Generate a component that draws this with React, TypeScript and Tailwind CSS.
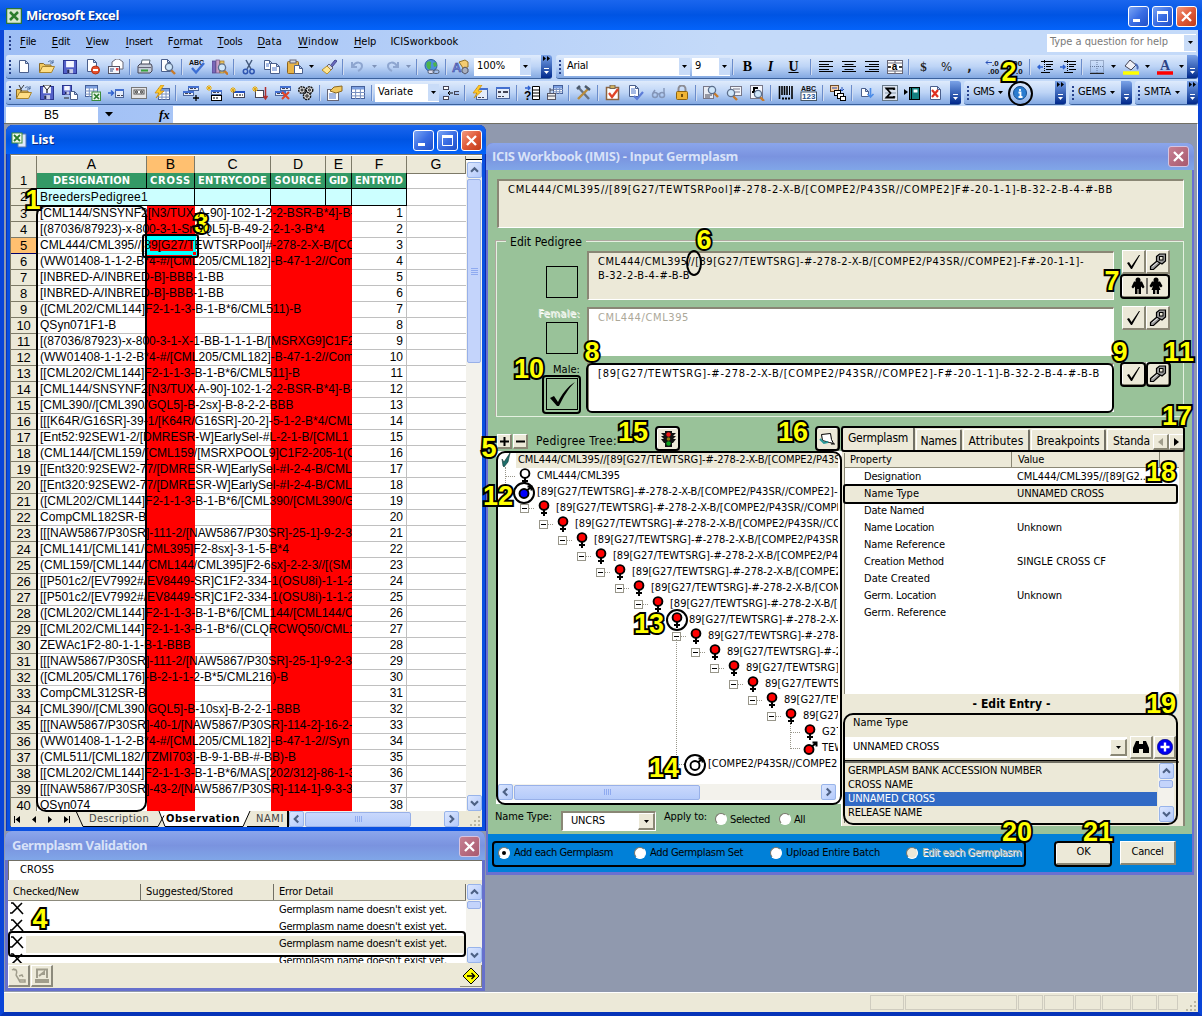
import React, { useLayoutEffect, useRef } from "react";

const UI = "font-['DejaVu_Sans_Condensed','DejaVu_Sans',sans-serif] [font-stretch:condensed]";
const TITLE = "font-['Open_Sans',sans-serif] [font-stretch:normal] text-[13px] font-bold";

/* Text set to an exact advance width by spreading its letters. */
function T({ w, className = "", children }: { w: number; className?: string; children: string }) {
  const ref = useRef<HTMLSpanElement>(null);
  useLayoutEffect(() => {
    const el = ref.current;
    if (!el) return;
    el.style.letterSpacing = "0px";
    el.style.letterSpacing = `${(w - el.getBoundingClientRect().width) / children.length}px`;
  }, [w, children]);
  return (
    <span ref={ref} className={"inline-block shrink-0 whitespace-pre " + className}>
      {children}
    </span>
  );
}

function G({ children, className = "" }: { children: React.ReactNode; className?: string }) {
  return (
    <svg viewBox="0 0 16 16" className={"h-4 w-4 shrink-0 " + className} fill="none" stroke="#334a7c" strokeWidth="1">
      {children}
    </svg>
  );
}

const Page = ({ x = 3, y = 1, w = 10, h = 13 }: { x?: number; y?: number; w?: number; h?: number }) => (
  <path
    d={`M${x + 0.5} ${y + 0.5}h${w - 4}l3 3v${h - 4}h-${w - 1}zM${x + w - 3.5} ${y + 0.5}v3h3`}
    fill="#fff"
    stroke="#4a5f8c"
  />
);
const Lens = ({ x = 9, y = 7 }: { x?: number; y?: number }) => (
  <g>
    <path d={`M${x + 2} ${y + 3}l4 4`} stroke="#c87a28" strokeWidth="2.4" />
    <circle cx={x} cy={y} r="3.6" fill="#cfe6fa" stroke="#5c6f8c" strokeWidth="1.3" />
  </g>
);
const Disk = ({ x = 1, y = 1, s = 14 }: { x?: number; y?: number; s?: number }) => (
  <g>
    <rect x={x + 0.5} y={y + 0.5} width={s - 1} height={s - 1} fill="#5360c8" stroke="#2b3590" />
    <rect x={x + s * 0.22} y={y + 1} width={s * 0.56} height={s * 0.45} fill="#f4f6ff" stroke="none" />
    <rect x={x + s * 0.3} y={y + s * 0.65} width={s * 0.42} height={s * 0.3} fill="#c6cbe8" stroke="none" />
    <rect x={x + s * 0.3} y={y + s * 0.68} width={s * 0.15} height={s * 0.25} fill="#20285c" stroke="none" />
  </g>
);
const Folder = () => (
  <g>
    <path d="M.5 13.500V4.500h4l1.500 1.500h6v2" fill="#f0c860" stroke="#8a6a28" />
    <path d="M.5 13.500l3-6h12l-3 6z" fill="#ffdf86" stroke="#a8842e" />
    <path d="M9 3c2-2 4-1 5 1m0-3v3h-3" stroke="#4a6a9c" />
  </g>
);
const Tbl = ({ x = 1, y = 2, w = 14, h = 12 }: { x?: number; y?: number; w?: number; h?: number }) => (
  <g>
    <rect x={x + 0.5} y={y + 0.5} width={w - 1} height={h - 1} fill="#fff" stroke="#45609a" />
    <rect x={x + 1} y={y + 1} width={w - 2} height="2.500" fill="#7c9fe0" stroke="none" />
    <path
      d={`M${x} ${y + h * 0.5}h${w}M${x} ${y + h * 0.76}h${w}M${x + w * 0.33} ${y + 3}v${h - 3}M${x + w * 0.67} ${y + 3}v${h - 3}`}
      stroke="#7890c0"
    />
  </g>
);
const Form = ({ x = 5, y = 6, w = 10, h = 7 }: { x?: number; y?: number; w?: number; h?: number }) => (
  <g>
    <rect x={x + 0.5} y={y + 0.5} width={w - 1} height={h - 1} fill="#e4ecfa" stroke="#4a659c" />
    <path d={`M${x} ${y + 1}h${w}`} stroke="#4470d0" strokeWidth="2" />
    <path d={`M${x + 2} ${y + h - 2.5}h3M${x + 6} ${y + h - 2.5}h2`} stroke="#445" />
  </g>
);
const Star = ({ x = 3, y = 3 }: { x?: number; y?: number }) => (
  <path d={`M${x - 3} ${y}h6M${x} ${y - 3}v6M${x - 2} ${y - 2}l4 4M${x + 2} ${y - 2}l-4 4`} stroke="#e8a800" />
);
const Bolt = () => <path d="M7 0L1 8h4l-3 5 8-7H6l4-6z" fill="#ffc928" stroke="#c88808" strokeWidth=".7" />;
const glyph = "font-['Liberation_Sans',sans-serif] font-bold";

const ic: Record<string, React.ReactNode> = {
  new: <G><Page /></G>,
  open: <G><Folder /></G>,
  save: <G><Disk /></G>,
  perm: <G><Page x={2} y={0} /><circle cx="10.500" cy="11" r="4" fill="#e8502c" stroke="#b03010" /><path d="M8 11h5" stroke="#fff" strokeWidth="2" /></G>,
  mail: <G><path d="M4 7V3l4-3h3l4 3v7H6" fill="#fff" stroke="#667" /><rect x=".5" y="7.500" width="11" height="7" fill="#f4f6fb" stroke="#556" /><path d="M2 10h4M2 12h3" /><rect x="8" y="9" width="2.500" height="2.500" fill="#d44" stroke="none" /></G>,
  print: <G><path d="M4 6l1-5h8l-1 5" fill="#fff" stroke="#567" /><path d="M1 7l2-2h11l1 2v5l-2 2H1z" fill="#c5ccd8" stroke="#445" /><path d="M1 8.500h13" stroke="#667" /><path d="M4 11.500h7" stroke="#37a03c" strokeWidth="2" /></G>,
  preview: <G><Page x={1} y={0} /><Lens x={9} y={8} /></G>,
  spell: <G className="overflow-visible"><text x="0" y="5.500" fontSize="7" className={glyph} fill="#111" stroke="none">ABC</text><path d="M3 9l4 4.500L15 4" stroke="#3c6fd4" strokeWidth="2.400" /></G>,
  research: <G><rect x="0" y="2" width="3.500" height="12" fill="#7a68b8" stroke="#4a3d86" strokeWidth=".7" /><rect x="4" y="1" width="3.500" height="13" fill="#c8a0c8" stroke="#6a4d86" strokeWidth=".7" /><rect x="8" y="2" width="4" height="12" fill="#e8c060" stroke="#a07828" strokeWidth=".7" /><Lens x={10} y={8.500} /></G>,
  cut: <G><path d="M5 1l5 9M11 1L6 10" stroke="#44597c" strokeWidth="1.500" /><circle cx="4.500" cy="12.500" r="2.200" stroke="#2f55b0" strokeWidth="1.500" /><circle cx="11" cy="12.500" r="2.200" stroke="#2f55b0" strokeWidth="1.500" /></G>,
  copy: <G><Page x={0} y={1} w={9} h={10} /><Page x={6} y={4} w={10} h={11} /><path d="M2 5h3M2 7h3M8 9h5M8 11h5" stroke="#4c74c8" /></G>,
  paste: <G><rect x=".5" y="2.500" width="11" height="12" rx="1" fill="#e8b448" stroke="#8c6420" /><rect x="3" y="1" width="6" height="3" fill="#d4d8e0" stroke="#667" /><Page x={7} y={6} w={9} h={9} /></G>,
  brush: <G><path d="M9 7l5-6 2 1-5 6z" fill="#6a6cc0" stroke="#44468c" /><path d="M8 5l4 4-2 2-4-4z" fill="#d8d8e0" stroke="#667" /><path d="M6 7l4 4-4 4-5-4z" fill="#ffe690" stroke="#b8902c" /></G>,
  undo: <G><path d="M2 3v5h5M3 7c3-5 9-4 9 0 0 3-2 4-4 5" stroke="#8ea6d0" strokeWidth="2" /></G>,
  redo: <G><path d="M14 3v5H9m4-1C10 2 4 3 4 7c0 3 2 4 4 5" stroke="#8ea6d0" strokeWidth="2" /></G>,
  globe: <G><circle cx="7" cy="6.500" r="6" fill="#4c8fdc" stroke="#2c5c9c" /><path d="M3 3c3-2 5 0 4 2s1 3-1 5-5-4-3-7zM9 4l3-1 1 4-3 1z" fill="#4cb44c" stroke="none" /><rect x="4" y="11" width="6" height="3.500" rx="1.700" stroke="#555f74" fill="#dde" /><rect x="9" y="11" width="6" height="3.500" rx="1.700" stroke="#555f74" /></G>,
  draw: <G className="overflow-visible"><path d="M6 3l6-2 3 2v5l-5 1z" fill="#f4cc70" stroke="#94742c" /><path d="M9 10l3-2 3 2v3l-3 2-3-2z" fill="#a8b0c0" stroke="#556" /><text x="-1" y="13" fontSize="13" className={glyph} fill="#6c7ed0" stroke="#34459c" strokeWidth=".5">A</text></G>,
  al: <G><path d="M1 2.500h14M1 5.500h10M1 7.500h14M1 10.500h10M1 12.500h14" stroke="#000" /></G>,
  ac: <G><path d="M1 2.500h14M3.500 5.500h9M1 7.500h14M3.500 10.500h9M1 12.500h14" stroke="#000" /></G>,
  ar: <G><path d="M1 2.500h14M5 5.500h10M1 7.500h14M5 10.500h10M1 12.500h14" stroke="#000" /></G>,
  merge: <G><rect x=".5" y="1.500" width="15" height="13" fill="#fff" stroke="#667" /><path d="M0 4h16M0 12h16M8 1v3M8 12v3" stroke="#667" /><path d="M1 8h3m8 0h3" stroke="#000" strokeWidth="1.500" /><text x="4.800" y="11" fontSize="10" className={glyph} fill="#000" stroke="none">a</text></G>,
  dec1: <G><text x="7" y="7" fontSize="8" className={glyph} fill="#111" stroke="none">.0</text><text x="3" y="15" fontSize="8" className={glyph} fill="#111" stroke="none">.00</text><path d="M7 3.500H1m2-2l-2 2 2 2" stroke="#2850b8" /></G>,
  dec2: <G><text x="3" y="7" fontSize="8" className={glyph} fill="#111" stroke="none">.00</text><text x="8" y="15" fontSize="8" className={glyph} fill="#111" stroke="none">.0</text></G>,
  out: <G><path d="M4 2.500h12M9 5.500h7M9 7.500h5M9 10.500h7M4 13.500h9" stroke="#000" /><path d="M7.500 1v14" stroke="#000" strokeDasharray="1 1" /><path d="M6 8H1m2-2L1 8l2 2" stroke="#2f62d0" strokeWidth="1.500" /></G>,
  ind: <G><path d="M4 2.500h12M9 5.500h7M9 7.500h5M9 10.500h7M4 13.500h9" stroke="#000" /><path d="M7.500 1v14" stroke="#000" strokeDasharray="1 1" /><path d="M0 8h5M3 6l2 2-2 2" stroke="#2f62d0" strokeWidth="1.500" /></G>,
  borders: <G><path d="M1.500 1.500h13v12h-13zM8 1v13M1 7.500h14" stroke="#667a9c" strokeDasharray="1 1" /><path d="M1 14.500h14" stroke="#222" /></G>,
  fill: <G><path d="M7 1l6 5-5 5-6-4z" fill="#f0f0f6" stroke="#445" /><path d="M12 5c3 1 3 4 2 5" stroke="#4c6cb8" strokeWidth="2" /><path d="M0 14h16" stroke="#ff0" strokeWidth="3.500" /></G>,
  fcol: <G><text x="3" y="11" fontSize="14" className="font-['Liberation_Serif',serif] font-bold" fill="#2c4486" stroke="none">A</text><path d="M0 14h16" stroke="#f00" strokeWidth="3.500" /></G>,
  open2: <G><Folder /><path d="M3 0l2 4 3-4M5 4v3" stroke="#333" /></G>,
  save2: <G><Disk /><path d="M4 0l4 5 4-5z" fill="#fff" stroke="#222" /><path d="M8 5v3" stroke="#222" strokeWidth="1.300" /></G>,
  save3: <G><Disk x={0} y={0} s={10} /><Page x={8} y={6} w={8} h={9} /><path d="M2 13h5" stroke="#222" /></G>,
  xl: <G><Tbl x={0} y={0} w={13} h={12} /><rect x="7" y="7" width="8.500" height="8.500" fill="#e8f4e8" stroke="#3c8c3c" /><path d="M9 9l5 5M14 9l-5 5" stroke="#2c7c2c" strokeWidth="1.700" /></G>,
  arrowform: <G><Form x={7} y={4} w={9} h={9} /><path d="M0 8h5M3 5.500L5.500 8 3 10.500" stroke="#2f62d0" strokeWidth="1.500" /></G>,
  tape: <G><rect x=".5" y="2.500" width="15" height="11" fill="#e4e4e6" stroke="#777" /><rect x="3" y="5" width="10" height="4" fill="#fff" stroke="#555" /><circle cx="5.500" cy="7" r="1" stroke="#222" /><circle cx="10.500" cy="7" r="1" stroke="#222" /></G>,
  bolttab: <G><Tbl x={4} y={3} w={12} h={12} /><Bolt /></G>,
  rowadd: <G><Form x={5} y={1} w={11} h={5} /><Form x={0} y={6} w={11} h={5} /><path d="M10 13h6M13 10v6" stroke="#000" strokeWidth="1.300" /></G>,
  star1: <G><Form x={5} y={5} w={11} h={5} /><rect x="5.500" y="10.500" width="10" height="5" fill="#fff" stroke="#000" /><path d="M7 13h6" stroke="#000" strokeDasharray="2 1" /><Star /></G>,
  star2: <G><rect x="4.500" y="6.500" width="11" height="6" fill="#fff" stroke="#445" /><path d="M5 7h11" stroke="#2450c0" strokeWidth="2" /><path d="M7 10h7" stroke="#000" strokeDasharray="2 1" /><Star x={4} y={5} /></G>,
  star3: <G><rect x="3.500" y="5.500" width="8" height="7" fill="#fff" stroke="#445" /><path d="M13.500 2v12m-2-3l2 3 2-3" stroke="#b03030" strokeWidth="1.500" /><Star x={3} y={4} /></G>,
  rowdel: <G><Form x={5} y={1} w={11} h={5} /><Form x={0} y={6} w={11} h={5} /><path d="M7 7l7 7M14 7l-7 7" stroke="#e04428" strokeWidth="2" /></G>,
  gears: <G><g stroke="#111" fill="#d8d8d8"><circle cx="4" cy="5" r="3.300" strokeWidth="1.400" strokeDasharray="2 .7" /><circle cx="11.500" cy="5" r="3.300" strokeWidth="1.400" strokeDasharray="2 .7" /><circle cx="9" cy="11" r="3.600" strokeWidth="1.400" strokeDasharray="2 .7" /><circle cx="4" cy="5" r="1" /><circle cx="11.500" cy="5" r="1" /><circle cx="9" cy="11" r="1.200" /></g></G>,
  props: <G><rect x=".5" y="4.500" width="11" height="11" fill="#fff" stroke="#667" /><path d="M2 9h7M2 11h7M2 13h7" stroke="#4c74c8" /><path d="M3 6l4-4 8-1v5l-6 2z" fill="#f0c860" stroke="#8c6820" /></G>,
  table: <G><Tbl x={1} y={1} w={14} h={13} /></G>,
  vartree: <G><rect x=".5" y="1.500" width="5" height="3" fill="#fff" stroke="#445" /><rect x=".5" y="11.500" width="5" height="3" fill="#fff" stroke="#445" /><rect x="11.500" y="6.500" width="5" height="3" fill="#a8c4f4" stroke="#445" /><path d="M10 8H5m2-2L5 8l2 2" stroke="#000" /></G>,
  boltform: <G><Form x={4} y={3} w={12} h={12} /><Bolt /></G>,
  form: <G><Form x={1} y={2} w={14} h={12} /><path d="M3 7h3M8 7h5" stroke="#445" strokeWidth="2" /></G>,
  qlist: <G className="overflow-visible"><text x="0" y="15" fontSize="12" className={glyph} fill="#000" stroke="none">?</text><path d="M1 3h5M4 1l2 2-2 2" stroke="#2f62d0" strokeWidth="1.400" /><path d="M8.500 1.500h7v13h-7zM8 5h8M8 8h8M8 11h8" stroke="#000" fill="#fff" /></G>,
  stack: <G><Tbl x={6} y={0} w={10} h={9} /><rect x=".5" y="8.500" width="8" height="6" fill="#eee" stroke="#556" /><path d="M0 11h8M3 5h4M3 3v5" stroke="#445" /></G>,
  tools: <G><path d="M2 2l11 12" stroke="#667284" strokeWidth="2.400" /><path d="M13 3L2 14" stroke="#b88c3c" strokeWidth="2.400" /><path d="M9 1l5 4M1 4l3-3" stroke="#4c5a6c" strokeWidth="2.500" /></G>,
  clip: <G><rect x="1.500" y="2.500" width="12" height="12" fill="#fff" stroke="#8c6440" strokeWidth="1.500" /><rect x="5" y="0" width="5" height="3.500" fill="#d0b060" stroke="#765" /><path d="M4 8l3 4 6-8" stroke="#e04428" strokeWidth="2.300" /></G>,
  doccheck: <G><Page x={1} y={0} w={10} h={12} /><path d="M3 4h4M3 6h5M3 8h5" stroke="#4c74c8" /><path d="M6 11l3 3 6-7" stroke="#5c7cd8" strokeWidth="2.200" /></G>,
  glasses: <G><circle cx="4" cy="10" r="2.500" stroke="#8496b8" strokeWidth="1.500" /><circle cx="11" cy="10" r="2.500" stroke="#8496b8" strokeWidth="1.500" /><path d="M2 8l2-3M13 8V3M6 9h3" stroke="#8496b8" strokeWidth="1.400" /></G>,
  lock: <G><path d="M4.500 7V4a3.500 3.500 0 017 0v3" stroke="#8c8c94" strokeWidth="2" /><rect x="2.500" y="6.500" width="11" height="8" rx="1" fill="#f0b434" stroke="#8c6414" /><path d="M8 9v3" stroke="#442c04" strokeWidth="1.500" /></G>,
  f1: <G><rect x=".5" y="1.500" width="10" height="12" fill="#e8ecf4" stroke="#778" /><path d="M2 10h7M2 12h5" stroke="#445" /><Lens x={9} y={5} /></G>,
  f2: <G><rect x="4.500" y="1.500" width="11" height="9" fill="#f4f6fb" stroke="#778" /><path d="M7 4h7M9 7h5" stroke="#778" /><Lens x={5} y={8} /></G>,
  f3: <G><rect x="1.500" y=".5" width="12" height="13" fill="#f4f6fb" stroke="#778" /><path d="M4 3h5M5 3v4M3 7h4" stroke="#000" strokeWidth="2" /><Lens x={9} y={9} /></G>,
  barcode: <G><path d="M1.500 1v13M4 1v9M6.500 1v9M9 1v9M14 1v13" stroke="#000" strokeWidth="1.600" /><path d="M11.500 1v9" stroke="#000" /><path d="M4 13.500h8" stroke="#000" strokeWidth="2" strokeDasharray="2 1" /></G>,
  abc: <G className="overflow-visible"><text x="0" y="6" fontSize="7" className={glyph} fill="#111" stroke="none">ABC</text><rect x="0" y="7" width="15.500" height="8.500" fill="#fff" stroke="#456" /><text x="1" y="14" fontSize="8" className={glyph} fill="#245090" stroke="none">123</text></G>,
  cascade: <G><rect x=".5" y=".5" width="8" height="6" fill="#f8d0a8" stroke="#6c4c2c" /><path d="M2 3h5M12 2v4m-2-2l2 2 2-2" stroke="#2450b8" /><rect x="4.500" y="5.500" width="6" height="5" fill="#fff" stroke="#000" /><rect x="7.500" y="8.500" width="6" height="5" fill="#fff" stroke="#000" /><rect x="10.500" y="11.500" width="5" height="4" fill="#fff" stroke="#000" /></G>,
  down: <G><Page x={2} y={3} w={8} h={9} /><path d="M11.500 3v9m-3-3l3 3 3-3" stroke="#4c8ce8" strokeWidth="1.600" /></G>,
  sigma: <G><rect x=".5" y=".5" width="15" height="15" fill="#dce4f0" stroke="#678" /><path d="M3 4h11M3 8h11M3 12h11" stroke="#89a" /><path d="M12 5V3.500H4.500l4 4.500-4 4.500H12V11" stroke="#000" strokeWidth="1.800" fill="none" /></G>,
  book: <G className="overflow-visible"><path d="M-1 4l4 3-4 3z" fill="#000" stroke="none" /><rect x="4.500" y="2.500" width="10" height="12" fill="#148080" stroke="#000" /><path d="M6.500 2v12" stroke="#000" /><rect x="8.500" y="4.500" width="4" height="3" fill="#fff" stroke="none" /></G>,
  docx: <G><Page x={2} y={1} w={11} h={14} /><path d="M4 5l6 7M10 5l-6 7" stroke="#e03020" strokeWidth="2.200" /></G>,
};

function Ico({ n }: { n: string }) {
  if (n === "|")
    return (
      <div className="flex w-[6px] shrink-0 justify-center">
        <div className="h-4 w-[2px] border-r border-white/70 bg-[#6a8ccb]" />
      </div>
    );
  if (n === "v" || n === "V")
    return (
      <div className="flex w-[11px] shrink-0 justify-center">
        <Caret className={n === "v" ? "text-[#7f93b8]" : "text-black"} />
      </div>
    );
  return <div className="flex w-[23px] shrink-0 justify-center">{ic[n]}</div>;
}
const Icons = ({ list }: { list: string }) => (
  <>
    {list.split(" ").map((n, i) => (
      <Ico key={i} n={n} />
    ))}
  </>
);
const Caret = ({ className = "text-black" }: { className?: string }) => (
  <svg viewBox="0 0 5 3" className={"h-[3px] w-[5px] " + className}>
    <path d="M0 0h5L2.500 3z" fill="currentColor" />
  </svg>
);
const Grip = () => (
  <div className="flex w-[6px] shrink-0 flex-col items-center gap-[2px] pl-px">
    {[0, 1, 2, 3].map((i) => (
      <div key={i} className="h-[2px] w-[2px] bg-[#27418c]" />
    ))}
  </div>
);
function Bar({ className, children, more = false }: { className: string; children: React.ReactNode; more?: boolean }) {
  return (
    <div className={"flex h-[24px] items-center overflow-hidden rounded-[3px] border-b border-[#3b619c] bg-linear-to-b from-[#dfebfc] via-[#bdd4f6] to-[#84a9e2] " + className}>
      <Grip />
      {children}
      <div className="ml-auto flex h-full w-[11px] shrink-0 flex-col items-center justify-end gap-[2px] bg-linear-to-b from-[#7ba2e7] to-[#02288c] pb-1">
        {more && (
          <svg viewBox="0 0 8 5" className="mb-[5px] h-[5px] w-2">
            <path d="M0 0l3 2.500L0 5zM4 0l3 2.500L4 5z" fill="#000" />
          </svg>
        )}
        <div className="h-px w-[5px] bg-white" />
        <Caret className="text-white" />
      </div>
    </div>
  );
}
const Combo = ({ text, w, className }: { text: string; w: number; className: string }) => (
  <div className={"flex h-[18px] shrink-0 items-center bg-white pl-[3px] text-[11px] " + className}>
    <T w={w}>{text}</T>
    <div className="ml-auto flex h-[17px] w-[11px] items-center justify-center bg-[#c9dcf8]">
      <Caret />
    </div>
  </div>
);

function WinBtn({ kind, dim = false }: { kind: "min" | "max" | "close"; dim?: boolean }) {
  const bg =
    kind === "close"
      ? dim
        ? "bg-linear-to-br from-[#c68093] to-[#a8586e] border-[#d6c4e0]"
        : "bg-linear-to-br from-[#f09a80] via-[#e05a38] to-[#c03c18] border-white"
      : "bg-linear-to-br from-[#7ba4f4] via-[#3a6de4] to-[#2050c8] border-white";
  return (
    <div className={"flex h-[21px] w-[21px] items-center justify-center rounded-[3px] border " + bg}>
      <svg viewBox="0 0 19 19" className="h-[19px] w-[19px]" stroke="#fff" fill="none">
        {kind === "min" && <path d="M4 13.500h7" strokeWidth="3" />}
        {kind === "max" && (
          <>
            <path d="M4.500 4v10.500h10V4" />
            <path d="M4 5.500h11" strokeWidth="3" />
          </>
        )}
        {kind === "close" && <path d="M5 5l9 9M14 5l-9 9" strokeWidth="2.300" />}
      </svg>
    </div>
  );
}

const Chev = ({ d }: { d: "u" | "d" | "l" | "r" }) => (
  <svg viewBox="0 0 15 15" className="h-full w-full" fill="none" stroke="#4d6185" strokeWidth="2.500">
    <path d={{ u: "M3.500 9.500l4-4 4 4", d: "M3.500 5.500l4 4 4-4", l: "M9.500 3.500l-4 4 4 4", r: "M5.500 3.500l4 4-4 4" }[d]} />
  </svg>
);
const SBtn = ({ d }: { d: "u" | "d" | "l" | "r" }) => (
  <div className="h-[16px] w-[15px] shrink-0 rounded-[2px] border border-[#98b4ea] bg-linear-to-br from-[#dbe6fe] to-[#b4cafb]">
    <Chev d={d} />
  </div>
);
const Ridges = ({ v = false }: { v?: boolean }) => (
  <div className={"flex gap-px " + (v ? "flex-col" : "")}>
    {[0, 1, 2, 3].map((i) => (
      <div key={i} className={v ? "h-px w-[7px] bg-[#8faaf0]" : "h-[6px] w-px bg-[#8faaf0]"} />
    ))}
  </div>
);
const VScroll = ({ thumb, grip = false, className = "" }: { thumb: string; grip?: boolean; className?: string }) => (
  <div className={"flex w-[16px] shrink-0 flex-col items-center bg-[#f3f2ec] " + className}>
    <SBtn d="u" />
    <div className={"mt-px flex w-[14px] items-center justify-center rounded-[2px] border border-[#98b0e8] bg-[#c4d4fb] " + thumb}>
      {grip && <Ridges v />}
    </div>
    <div className="mt-auto">
      <SBtn d="d" />
    </div>
  </div>
);
const HScroll = ({ thumb, className = "" }: { thumb: string; className?: string }) => (
  <div className={"flex h-[16px] items-center bg-[#f3f2ec] " + className}>
    <SBtn d="l" />
    <div className={"ml-px flex h-[15px] items-center justify-center rounded-[2px] border border-[#98b0e8] bg-linear-to-b from-[#c9d8fc] to-[#b5cbfa] " + thumb}>
      <Ridges />
    </div>
    <div className="ml-auto">
      <SBtn d="r" />
    </div>
  </div>
);

const AA = "[CML144/SNSYNF2[N3/TUX-A-90]-102-1-2-2-BSR-B*4]-B-";
const WW = "(WW01408-1-1-2-B*4-#/[CML205/CML182]-B-47-1-2//Com";
const ENT = "[[Ent320:92SEW2-77/[DMRESR-W]EarlySel-#I-2-4-B/CML";
const EV = "[[P501c2/[EV7992#/EV8449-SR]C1F2-334-1(OSU8i)-1-1-2";
const NAW = "[[[NAW5867/P30SR]-111-2/[NAW5867/P30SR]-25-1]-9-2-3";
const rows = [
  AA,
  "[(87036/87923)-x-800-3-1-SrGQL5]-B-49-2-2-1-3-B*4",
  "CML444/CML395//[89[G27/TEWTSRPool]#-278-2-X-B/[CO",
  WW,
  "[INBRED-A/INBRED-B]-BBB-1-BB",
  "[INBRED-A/INBRED-B]-BBB-1-BB",
  "([CML202/CML144]F2-1-1-3-B-1-B*6/CML511)-B",
  "QSyn071F1-B",
  "[(87036/87923)-x-800-3-1-X-1-BB-1-1-1-B/[MSRXG9]C1F2-",
  WW,
  "[[CML202/CML144]F2-1-1-3-B-1-B*6/CML511]-B",
  AA,
  "[CML390//[CML390/GQL5]-B-2sx]-B-8-2-2-BBB",
  "[[[K64R/G16SR]-39-1/[K64R/G16SR]-20-2]-5-1-2-B*4/CML",
  "[Ent52:92SEW1-2/[DMRESR-W]EarlySel-#L-2-1-B/[CML1",
  "(CML144/[CML159/[CML159/[MSRXPOOL9]C1F2-205-1(OS",
  ENT,
  ENT,
  "([CML202/CML144]F2-1-1-3-B-1-B*6/[CML390/[CML390/G",
  "CompCML182SR-B",
  NAW,
  "[CML141/[CML141/CML395]F2-8sx]-3-1-5-B*4",
  "(CML159/[CML144/[CML144/CML395]F2-6sx]-2-2-3//[(SML",
  EV,
  EV,
  "([CML202/CML144]F2-1-1-3-B-1-B*6/[CML144/[CML144/C",
  "[[CML202/CML144]F2-1-1-3-B-1-B*6/(CLQRCWQ50/CML1",
  "ZEWAc1F2-80-1-1-B-1-BBB",
  NAW,
  "([CML205/CML176]-B-2-1-1-2-B*5/CML216)-B",
  "CompCML312SR-B",
  "[CML390//[CML390/GQL5]-B-10sx]-B-2-2-1-BBB",
  "[[[NAW5867/P30SR]-40-1/[NAW5867/P30SR]-114-2]-16-2-",
  "(WW01408-1-1-2-B*4-#/[CML205/CML182]-B-47-1-2//Syn",
  "(CML511/[CML182/TZMI703]-B-9-1-BB-#-BB)-B",
  "[[CML202/CML144]F2-1-1-3-B-1-B*6/MAS[202/312]-86-1-3",
  "[[[NAW5867/P30SR]-43-2/[NAW5867/P30SR]-114-1]-9-3-3",
  "QSyn074",
];

const cols = "grid grid-cols-[26px_110px_48px_76px_55px_26px_55px_59px]";
const ARIAL = "font-['Liberation_Sans',sans-serif]";

function Sheet() {
  return (
    <div className={"h-[655px] w-[455px] overflow-hidden bg-white text-[12px] " + ARIAL}>
      <div className={cols + " h-[17px] text-[14px] leading-[17px] text-center"}>
        {["", "A", "B", "C", "D", "E", "F", "G"].map((c, i) => (
          <div key={i} className={"border-r border-b border-[#7d7a68] " + (c === "B" ? "border-[#00006c] bg-[#ffc070]" : "bg-[#ece9d8]")}>
            {c}
          </div>
        ))}
      </div>
      <div className={cols + " h-[16px]"}>
        <div className="border-r border-b border-[#7d7a68] bg-[#ece9d8] text-center text-[13px] leading-[15px]">1</div>
        {([["DESIGNATION", 77], ["CROSS", 41], ["ENTRYCODE", 69], ["SOURCE", 47], ["GID", 19], ["ENTRYID", 48]] as [string, number][]).map(([h, w]) => (
          <div key={h} className={"flex justify-center border-r border-b border-black bg-[#339966] text-[11px] leading-[15px] font-bold text-white " + UI}>
            <T w={w}>{h}</T>
          </div>
        ))}
        <div className="border-b border-[#c0c0c0]" />
      </div>
      <div className={cols + " h-[17px]"}>
        <div className="border-r border-b border-[#7d7a68] bg-[#ece9d8] text-center text-[13px] leading-[16px]">2</div>
        <div className="z-10 col-span-2 border-r border-b border-black bg-[#ccffff] pl-[3px] text-[12px] leading-[16px] whitespace-nowrap">
          <T w={108}>BreedersPedigree1</T>
        </div>
        {[0, 1, 2, 3].map((i) => (
          <div key={i} className="border-r border-b border-black bg-[#ccffff]" />
        ))}
        <div className="border-b border-[#c0c0c0]" />
      </div>
      {rows.map((r, i) => (
        <div key={i} className={cols + " relative h-[16px]"}>
          <div
            className={
              "border-r border-b border-[#7d7a68] text-center text-[13px] leading-[15px] tracking-[-0.3px] " +
              (i === 2 ? "border-b-[#00006c] bg-[#ffc070]" : "bg-[#ece9d8]")
            }
          >
            {i + 3}
          </div>
          <div className="border-b border-[#c0c0c0]">
            <div className="relative z-10 w-[315px] overflow-hidden pl-[3px] text-[12px] leading-[15px] tracking-[0.02px] whitespace-nowrap text-black">
              {r}
            </div>
          </div>
          <div className="bg-[#ff0000]" />
          <div className="border-b border-[#c0c0c0]" />
          <div className="col-span-2 bg-[#ff0000]" />
          <div className="border-r border-b border-[#c0c0c0] pr-[3px] text-right text-[12px] leading-[15px]">{i + 1}</div>
          <div className="border-b border-[#c0c0c0]" />
        </div>
      ))}
    </div>
  );
}

function ListWindow() {
  return (
    <div className="absolute top-px left-[2px] h-[706px] w-[480px] rounded-t-[7px] bg-[#0a50e0] px-[4px] shadow-[inset_1px_0_0_#0a34c0,inset_-1px_0_0_#0a2cb0]">
      <div className="-mx-[4px] flex h-[29px] items-center rounded-t-[7px] bg-linear-to-b from-[#1a66ee] via-[#0054e3] to-[#0463fa] pl-[5px] pr-[4px]">
        <G className="mr-[4px]">
          <path d="M7 2h8v13H7z" fill="#dfe9fb" stroke="#5878b0" />
          <rect x="1" y="1" width="10" height="10" fill="#f0f8ec" stroke="#3c8c3c" />
          <path d="M3 3l6 6M9 3L3 9" stroke="#2c7c2c" strokeWidth="1.800" />
        </G>
        <T w={23} className={TITLE + " text-white [text-shadow:1px_1px_0_#0a2a80]"}>List</T>
        <div className="ml-auto flex gap-[3px] pt-px">
          <WinBtn kind="min" />
          <WinBtn kind="max" />
          <WinBtn kind="close" />
        </div>
      </div>
      <div className="flex h-[672px] flex-col border-t border-l border-[#7d7a68] bg-white pt-px">
        <div className="flex">
          <Sheet />
          <div className="flex flex-col">
            <div className="mb-[2px] h-[4px] w-4 border-b border-black bg-[#ece9d8]" />
            <VScroll thumb="h-[184px]" grip className="h-[649px]" />
          </div>
        </div>
        <div className={"flex h-[16px] items-center bg-[#ece9d8] text-[11px] " + UI}>
          <svg viewBox="0 0 62 16" className="h-4 w-[62px] shrink-0">
            <path d="M3 5h1v7H3zM9 5v7L4.500 8.500zM25 5v7l-4-3.500zM37 5v7l4-3.500zM53 5v7l4.500-3.500zM58 5h1v7h-1z" fill="#000" />
          </svg>
          <svg viewBox="0 0 206 16" className="-mr-[206px] h-4 w-[206px] shrink-0">
            <path d="M86 0h91l-7 15.500H92z" fill="#fff" />
            <path d="M3 0l7 15.500h75l6-11M86 0l6 15.500h78L177 0M174 15.500h32" stroke="#000" fill="none" />
          </svg>
          <T w={60} className="relative ml-[16px] text-[#444]">Description</T>
          <T w={74} className="relative ml-[17px] font-bold">Observation</T>
          <T w={28} className="relative ml-[16px] text-[#444]">NAMI</T>
          <div className="ml-[3px] h-4 w-[2px] bg-black" />
          <HScroll thumb="w-[106px]" className="w-[170px]" />
          <svg viewBox="0 0 18 16" className="ml-auto h-4 w-[18px]">
            <path d="M14 5h2v2h-2zM10 9h2v2h-2zM14 9h2v2h-2zM6 13h2v2H6zM10 13h2v2h-2zM14 13h2v2h-2z" fill="#bbb7a2" />
          </svg>
        </div>
      </div>
    </div>
  );
}

const Cross = () => (
  <svg viewBox="0 0 14 13" className="h-[13px] w-[14px]" stroke="#000" fill="none">
    <path d="M1 1h2l10 11M12 1L2 11H0" strokeWidth="1.600" />
  </svg>
);

function ValidationWindow() {
  return (
    <div className={"absolute top-[707px] left-[1px] h-[160px] w-[480px] rounded-t-[7px] bg-[#6670cc] px-[3px] text-[11px] " + UI}>
      <div className="-mx-[3px] flex h-[29px] items-center rounded-t-[7px] bg-linear-to-b from-[#8ba6ec] via-[#7a93df] to-[#80a6e8] pr-[5px] pl-[7px]">
        <T w={135} className={TITLE + " text-[#d8e2f8]"}>Germplasm Validation</T>
        <div className="ml-auto pt-px">
          <WinBtn kind="close" dim />
        </div>
      </div>
      <div className="h-[128px] bg-[#ece9d8]">
        <div className="flex h-[20px] items-center border-t border-l border-[#716f64] bg-white pl-[11px]">
          <T w={34}>CROSS</T>
        </div>
        <div className="mt-[4px] flex h-[79px] bg-white">
          <div className="w-[458px] overflow-hidden">
            <div className="flex h-[17px] items-center border-b border-[#8c8a7c] bg-[#ece9d8]">
              <div className="w-[133px] border-r border-[#716f64] pl-[5px]"><T w={66}>Checked/New</T></div>
              <div className="w-[133px] border-r border-[#716f64] pl-[5px]"><T w={87}>Suggested/Stored</T></div>
              <div className="grow border-r border-[#716f64] pl-[5px]"><T w={54}>Error Detail</T></div>
            </div>
            {[0, 1, 2, 3].map((i) => (
              <div key={i} className="flex h-[17px] items-center pt-px">
                <div className="flex w-[18px] shrink-0 justify-center pb-[3px]"><Cross /></div>
                <div className={"flex h-[17px] grow items-center pl-[253px] " + (i === 2 ? "bg-[#ece9d8]" : "")}>
                  <T w={168}>Germplasm name doesn't exist yet.</T>
                </div>
              </div>
            ))}
          </div>
          <VScroll thumb="h-[8px]" className="h-[79px]" />
        </div>
        <div className="mt-[2px] flex h-[23px]">
          {[0, 1].map((i) => (
            <div key={i} className="mr-px flex h-[22px] w-[22px] items-center justify-center border-r-2 border-b-2 border-[#8c8a7c] border-t border-l border-t-white border-l-white">
              <G>
                {i === 0 ? (
                  <path d="M1 2c3-2 6 0 4 5M2 1l2 1M5 7l3 5h6v2H9zM8 8l3-1 1 2" stroke="#a09d8c" strokeWidth="1.500" />
                ) : (
                  <path d="M3 10V1.500h10V10M1 12h14M1 14h14M5 8l5-4v3" stroke="#a09d8c" strokeWidth="2" />
                )}
              </G>
            </div>
          ))}
          <div className="ml-auto flex h-[22px] w-[22px] items-center justify-center border-r border-b border-[#8c8a7c]">
            <svg viewBox="0 0 18 18" className="h-[18px] w-[18px]">
              <path d="M9 1l8 8-8 8-8-8z" fill="#ff0" stroke="#000" />
              <path d="M5 9h7M9.500 6L12.500 9l-3 3" stroke="#000" strokeWidth="1.400" fill="none" />
            </svg>
          </div>
        </div>
      </div>
    </div>
  );
}

const sunken = "border-t-2 border-l-2 border-b border-r border-t-[#8a8775] border-l-[#8a8775] border-b-white border-r-white";
const Raised = ({ className = "", children }: { className?: string; children?: React.ReactNode }) => (
  <div className={"flex shrink-0 items-center justify-center border-t border-l border-r-2 border-b-2 border-t-white border-l-white border-r-[#8a8775] border-b-[#8a8775] bg-[#ece9d8] " + className}>
    {children}
  </div>
);
const CheckMark = () => (
  <svg viewBox="0 0 16 16" className="h-4 w-4" fill="#000">
    <path d="M1 9l2-1 2.500 4L13 1h1L6 15H5z" />
  </svg>
);
const KeyIcon = () => (
  <svg viewBox="0 0 18 18" className="h-[18px] w-[18px]" fill="#9a9a9a" stroke="#000">
    <path d="M1.500 13.500l7-6 3 2.500-7 6.500h-3z" strokeWidth="1.200" />
    <path d="M7.500 3.500l3-2.500h6v7l-3.500 3-5.500-3z" strokeWidth="1.200" />
    <rect x="10.500" y="3.500" width="3.500" height="3.500" fill="#ece9d8" />
    <path d="M3.500 13.500l5-4" stroke="#eee" />
  </svg>
);
const PairBtns = () => (
  <div className="flex">
    <Raised className="h-[24px] w-[24px]"><CheckMark /></Raised>
    <Raised className="h-[24px] w-[24px]"><KeyIcon /></Raised>
  </div>
);
const People = () => (
  <svg viewBox="0 0 34 18" className="h-[18px] w-[34px]" fill="#000">
    <circle cx="9" cy="3" r="2.500" />
    <path d="M5 4.500h8l2.500 5.500-1.500 1.500-2-2V17H9.500v-5h-1v5H6V9.500l-2 2L2.500 10z" />
    <path d="M17.500 1h1v16h-1z" />
    <circle cx="27" cy="3" r="2.500" />
    <path d="M23 4.500h8l2.500 4.500-1.500 1.500-2-1.500 1.500 4H30v4h-2.300v-4h-1.400v4H24v-4h-1.500L24 9l-2 1.500L20.500 9z" />
  </svg>
);

function PedRow({ label, labelClass = "", checked = false, panel, className = "", text, extra = false }: any) {
  return (
    <div className="flex h-[56px]">
      <div className="w-[90px] shrink-0">
        <div className={"flex h-[15px] items-center justify-end pr-[7px] " + labelClass}>{label}</div>
        <div className="ml-[49px] flex h-[32px] w-[32px] items-center justify-center border border-black">
          {checked && (
            <svg viewBox="0 0 28 28" className="h-7 w-7" fill="#000">
              <path d="M2 18l4-2 4 6C14 14 19 7 27 2 20 9 16 16 11 26H9z" />
            </svg>
          )}
        </div>
      </div>
      <div className={"h-[49px] w-[527px] shrink-0 pt-[2px] pl-[9px] leading-[14px] " + sunken + " " + panel + " " + className}>{text}</div>
      <div className="-mt-px ml-[8px]">
        <PairBtns />
        {extra && <Raised className="h-[24px] w-[48px]"><People /></Raised>}
      </div>
    </div>
  );
}

const FemaleIcon = ({ fill = "#ff0000" }: { fill?: string }) => (
  <svg viewBox="0 0 12 16" className="h-4 w-[12px]" stroke="#000">
    <circle cx="6" cy="5.500" r="4.400" fill={fill} strokeWidth="1.900" />
    <path d="M6 10v6M3 13h6" strokeWidth="2" />
  </svg>
);
const MaleIcon = ({ fill = "#ff0000" }: { fill?: string }) => (
  <svg viewBox="0 0 15 16" className="h-4 w-[15px]" stroke="#000">
    <circle cx="6" cy="9.500" r="4.500" fill={fill} strokeWidth="1.900" />
    <path d="M9 6.500L13 3M9.500 2.500h4v4" strokeWidth="2" fill="none" />
  </svg>
);

type Node = { d: number; t: string; k: "f" | "m" | "fw" | "mw" | "mb" | "leaf"; box?: boolean; dots?: boolean };
const P = "89[G27/TEWTSRG]-#-278-2-X-B/[COMPE2/P43SR//COMPE2]-F#";
const nodes: Node[] = [
  { d: -1, t: "CML444/CML395//[89[G27/TEWTSRG]-#-278-2-X-B/[COMPE2/P43SR", k: "leaf" },
  { d: 0, t: "CML444/CML395", k: "fw", dots: true },
  { d: 0, t: "[" + P, k: "mb" },
  ...[1, 2, 3, 4, 5, 6, 7].map((d): Node => ({ d, t: "[" + P, k: "f", box: true })),
  ...[8, 9, 10, 11, 12, 13, 14].map((d): Node => ({ d, t: P, k: "f", box: true })),
  { d: 15, t: "G27", k: "f", dots: true },
  { d: 15, t: "TEWTSR", k: "m", dots: true },
  { d: 9, t: "[COMPE2/P43SR//COMPE2]-F#", k: "mw", dots: true },
];

function Tree() {
  return (
    <div className="relative h-[353px] w-[345px] bg-white pt-px pr-[3px] pl-[2px]">
      <div className="h-[332px] overflow-hidden">
        {nodes.map((n, i) => (
          <div key={i} className="flex h-[16px] items-center" style={{ paddingLeft: Math.max(0, n.d * 19) }}>
            {n.d >= 0 && (
              <div className="flex w-[17px] shrink-0 items-center justify-end">
                {n.box && (
                  <div className="flex h-[9px] w-[9px] items-center justify-center border border-[#98968a] bg-white">
                    <div className="h-px w-[5px] bg-black" />
                  </div>
                )}
                <div className={"h-px border-t border-dotted border-[#98968a] " + (n.box ? "w-[5px]" : n.dots ? "w-[10px]" : "w-0")} />
              </div>
            )}
            <div className={"flex w-[20px] shrink-0 justify-center " + (n.d < 0 ? "-ml-[2px]" : "")}>
              {n.k === "f" && <FemaleIcon />}
              {n.k === "fw" && <FemaleIcon fill="#fff" />}
              {n.k === "m" && <MaleIcon />}
              {n.k === "mb" && <MaleIcon fill="#0000ff" />}
              {n.k === "mw" && <MaleIcon fill="#fff" />}
              {n.k === "leaf" && (
                <svg viewBox="0 0 10 15" className="h-[15px] w-[10px]">
                  <path d="M2 13L1 6l2 3L9 0 7 9l-4 5z" fill="#1e6e6a" stroke="#0c3434" strokeWidth=".6" />
                </svg>
              )}
            </div>
            <div className={"h-[16px] w-[330px] pl-[2px] leading-[16px] whitespace-nowrap " + (n.d < 0 ? "bg-[#ece9d8] tracking-[-0.08px]" : "tracking-[0.01px]")}>{n.t}</div>
          </div>
        ))}
      </div>
      <HScroll thumb="w-[186px]" className="w-[338px]" />
      <div className="absolute top-[188px] left-[180px] h-[124px] border-l border-dotted border-[#98968a]" />
      <div className="absolute top-[271px] left-[294px] h-[27px] border-l border-dotted border-[#98968a]" />
      <div className="absolute top-[16px] left-[9px] h-[20px] border-l border-dotted border-[#98968a]" />
    </div>
  );
}

const Radio = ({ on = false, off = false }: { on?: boolean; off?: boolean }) => (
  <div className={"flex h-[12px] w-[12px] shrink-0 items-center justify-center rounded-full border border-[#77756a] border-r-white border-b-white " + (off ? "bg-[#ece9d8]" : "bg-white")}>
    {on && <div className="h-[4px] w-[4px] rounded-full bg-black" />}
  </div>
);

const props: [string, number, string, number][] = [
  ["Designation", 57, "CML444/CML395//[89[G2...", 132],
  ["Name Type", 55, "UNNAMED CROSS", 87],
  ["Date Named", 60, "", 0],
  ["Name Location", 70, "Unknown", 45],
  ["Name Reference", 81, "", 0],
  ["Creation Method", 80, "SINGLE CROSS CF", 89],
  ["Date Created", 66, "", 0],
  ["Germ. Location", 72, "Unknown", 45],
  ["Germ. Reference", 82, "", 0],
];

function PropertyPanel() {
  return (
    <div className="w-[344px] pt-[10px]">
      <div className="flex h-[24px] items-end overflow-hidden bg-[#ece9d8] text-[12px]">
        {([["Germplasm", 60, "w-[74px] h-[24px] border-l-2"], ["Names", 36, "w-[46px] h-[22px]"], ["Attributes", 55, "w-[67px] h-[22px]"], ["Breakpoints", 63, "w-[75px] h-[22px]"]] as [string, number, string][]).map(([t, w, c], i) => (
          <div key={t} className={"mr-px flex shrink-0 items-center justify-center rounded-t-[2px] border-t border-r-2 border-l border-white border-r-[#716f64] " + (i ? "" : "pb-[4px] ") + c}>
            <T w={w}>{t}</T>
          </div>
        ))}
        <div className="flex h-[22px] grow items-center border-t border-l border-white pl-[5px]"><T w={37}>Standa</T></div>
        {[0, 1].map((i) => (
          <Raised key={i} className="mb-px h-[16px] w-[16px]">
            <svg viewBox="0 0 5 8" className="h-2 w-[5px]"><path d={i ? "M0 0l5 4-5 4z" : "M5 0L0 4l5 4z"} fill={i ? "#000" : "#a09d8c"} /></svg>
          </Raised>
        ))}
      </div>
      <div className="h-[375px] border-r-2 border-l border-[#8a8775] border-l-white bg-[#ece9d8] pl-[2px] pr-[4px] pt-[2px]">
        <div className="h-[241px] border-l border-[#8a8775] bg-white">
          <div className="flex h-[15px] items-center border-b border-[#8a8775] bg-[#ece9d8]">
            <div className="w-[167px] border-r border-[#8a8775] pl-[5px]"><T w={42}>Property</T></div>
            <div className="w-[148px] border-r border-[#8a8775] pl-[6px]"><T w={26}>Value</T></div>
          </div>
          {props.map(([a, w, b, w2], i) => (
            <div key={a} className={"mr-[3px] flex h-[17px] items-center pt-px pl-[19px] " + (i === 1 ? "bg-[#ece9d8]" : "")}>
              <div className="w-[153px]"><T w={w}>{a}</T></div>
              {b && <T w={w2}>{b}</T>}
            </div>
          ))}
        </div>
        <div className="flex h-[20px] items-center justify-center text-[12px] font-bold"><T w={78}>- Edit Entry -</T></div>
        <div className="flex h-[19px] items-center pl-[9px]"><T w={55}>Name Type</T></div>
        <div className="mt-[3px] flex h-[23px] items-center bg-[#ece9d8]">
          <div className="flex h-[21px] w-[283px] items-center justify-between bg-white pl-[9px]">
            <T w={86}>UNNAMED CROSS</T>
            <Raised className="h-[17px] w-[17px]"><Caret /></Raised>
          </div>
          <Raised className="ml-[3px] h-[23px] w-[23px]">
            <svg viewBox="0 0 16 14" className="h-[14px] w-4" fill="#000"><path d="M3 1h3v3h4V1h3l3 7v5h-6V9H6v4H0V8z" /></svg>
          </Raised>
          <Raised className="ml-px h-[23px] w-[22px]">
            <svg viewBox="0 0 16 16" className="h-4 w-4"><circle cx="8" cy="8" r="7.700" fill="#0000f0" stroke="#00006c" strokeWidth=".6" /><path d="M8 3.500v9M3.500 8h9" stroke="#fff" strokeWidth="2.400" /></svg>
          </Raised>
        </div>
        <div className="mt-[2px] flex h-[62px] border-t-2 border-l border-[#716f64] bg-[#ece9d8]">
          <div className="w-[312px] pt-px leading-[14px]">
            {([["GERMPLASM BANK ACCESSION NUMBER", 194], ["CROSS NAME", 65], ["UNNAMED CROSS", 87], ["RELEASE NAME", 74]] as [string, number][]).map(([t, w], i) => (
              <div key={t} className={"flex h-[14px] items-center pl-[3px] " + (i === 2 ? "bg-[#316ac5] text-white" : "")}><T w={w}>{t}</T></div>
            ))}
          </div>
          <VScroll thumb="h-[8px]" className="ml-px h-[59px]" />
        </div>
      </div>
    </div>
  );
}

function GermplasmDialog() {
  return (
    <div className={"absolute top-[19px] left-[482px] h-[732px] w-[708px] rounded-t-[7px] bg-[#6a70d0] px-[2px] text-[11px] " + UI}>
      <div className="-mx-[2px] flex h-[27px] items-center rounded-t-[7px] bg-linear-to-b from-[#8ba6ec] via-[#7a93df] to-[#80a6e8] pr-[5px] pl-[6px]">
        <T w={246} className={TITLE + " text-[#d8e2f8]"}>ICIS Workbook (IMIS) - Input Germplasm</T>
        <div className="ml-auto"><WinBtn kind="close" dim /></div>
      </div>
      <div className="h-[664px] bg-[#99c299] pt-[9px]">
        <div className={"ml-[9px] h-[49px] w-[687px] bg-[#ece9d8] pt-px pl-[9px] leading-[16px] " + sunken}>
          <T w={605}>{"CML444/CML395//[89[G27/TEWTSRPool]#-278-2-X-B/[COMPE2/P43SR//COMPE2]F#-20-1-1]-B-32-2-B-4-#-BB"}</T>
        </div>
        <div className="relative mt-[13px] ml-[8px] h-[176px] w-[688px] border border-[#e4f0e0] pt-[9px] shadow-[-1px_-1px_0_#b0a8a0]">
          <div className="absolute -top-[8px] left-[9px] bg-[#99c299] px-[4px] text-[12px] leading-[16px]"><T w={72}>Edit Pedigree</T></div>
          <PedRow
            panel="bg-[#ece9d8]"
            extra
            text={
              <>
                <T w={486}>{"CML444/CML395//[89[G27/TEWTSRG]-#-278-2-X-B/[COMPE2/P43SR//COMPE2]-F#-20-1-1]-"}</T>
                <br />
                <T w={92}>B-32-2-B-4-#-B-B</T>
              </>
            }
          />
          <PedRow label={<T w={42}>Female:</T>} labelClass="text-[#e8efe4] [text-shadow:1px_1px_0_#fff]" panel="bg-white" className="text-[#aca899]" text={<T w={91}>CML444/CML395</T>} />
          <PedRow label={<T w={27}>Male:</T>} checked panel="bg-white" text={<T w={502}>{"[89[G27/TEWTSRG]-#-278-2-X-B/[COMPE2/P43SR//COMPE2]-F#-20-1-1]-B-32-2-B-4-#-B-B"}</T>} />
        </div>
        <div className="flex h-[417px]">
          <div className="w-[353px] pl-[8px]">
            <div className="flex h-[34px] items-end pl-px">
              {["+", "-"].map((s) => (
                <Raised key={s} className="mb-[2px] mr-px h-[15px] w-[15px]">
                  <svg viewBox="0 0 9 9" className="h-[9px] w-[9px]" stroke="#000" strokeWidth="2"><path d={s === "+" ? "M0 4.500h9M4.500 0v9" : "M0 4.500h9"} /></svg>
                </Raised>
              ))}
              <T w={81} className="ml-[7px] self-end pb-px text-[12px]">Pedigree Tree:</T>
              <Raised className="ml-[40px] h-[23px] w-[23px]">
                <svg viewBox="0 0 15 17" className="h-[17px] w-[15px]">
                  <path d="M4 0h7v16H4zM0 2h15l-3 3h3l-3 3h3l-3 4H3L0 8h3L0 5h3z" fill="#111" />
                  <circle cx="7.500" cy="3.500" r="2.200" fill="#f01818" /><circle cx="7.500" cy="8" r="1.800" fill="#8c7a10" /><circle cx="7.500" cy="12.500" r="2.200" fill="#10a020" />
                </svg>
              </Raised>
              <Raised className="ml-auto mr-[2px] h-[23px] w-[23px]">
                <svg viewBox="0 0 16 14" className="h-[14px] w-4" stroke="#000" fill="#fff"><path d="M2.500 2.500l9-1 1 6 2 4-4-1-7-2z" /><path d="M1 7l4 4 4-1" stroke="#2a9a9a" strokeWidth="2" fill="none" /><path d="M12 12h4" /></svg>
              </Raised>
            </div>
            <Tree />
            <div className="flex h-[30px] items-start">
              <T w={57} className="mt-[5px] -ml-px">Name Type:</T>
              <div className={"mt-[7px] ml-[9px] flex h-[20px] w-[95px] items-center justify-between bg-white pl-[8px] " + sunken}>
                <T w={34}>UNCRS</T>
                <Raised className="h-[17px] w-[17px]"><Caret /></Raised>
              </div>
              <T w={43} className="mt-[5px] ml-[8px]">Apply to:</T>
              <div className="mt-[9px] ml-[8px]"><Radio /></div>
              <T w={40} className="mt-[8px] ml-[3px]">Selected</T>
              <div className="mt-[9px] ml-[9px]"><Radio /></div>
              <T w={11} className="mt-[8px] ml-[3px]">All</T>
            </div>
          </div>
          <PropertyPanel />
        </div>
      </div>
      <div className="flex h-[38px] items-center bg-[#0080d8] pl-[10px]">
        <Radio on /><T w={99} className="ml-[4px]">Add each Germplasm</T>
        <div className="ml-[21px]"><Radio /></div><T w={93} className="ml-[4px]">Add Germplasm Set</T>
        <div className="ml-[27px]"><Radio /></div><T w={94} className="ml-[4px]">Upload Entire Batch</T>
        <div className="ml-[26px]"><Radio off /></div>
        <T w={99} className="ml-[4px] text-[#b8b4a4] [text-shadow:1px_1px_0_#fff]">Edit each Germplasm</T>
        <Raised className="ml-[35px] h-[24px] w-[56px]"><T w={14}>OK</T></Raised>
        <Raised className="ml-[8px] h-[24px] w-[56px]"><T w={32}>Cancel</T></Raised>
      </div>
    </div>
  );
}

/* Numbered callouts: label and place. */
const tags: [string, string][] = [
  ["1", "left-[3px] top-[185px]"], ["2", "left-[979px] top-[57px]"], ["3", "left-[171px] top-[209px]"],
  ["4", "left-[10px] top-[904px]"], ["5", "left-[459px] top-[433px]"], ["6", "left-[674px] top-[225px]"],
  ["7", "left-[1082px] top-[266px]"], ["8", "left-[562px] top-[337px]"], ["9", "left-[1090px] top-[337px]"],
  ["10", "left-[499px] top-[354px]"], ["11", "left-[1149px] top-[337px]"], ["12", "left-[468px] top-[481px]"],
  ["13", "left-[619px] top-[609px]"], ["14", "left-[634px] top-[753px]"], ["15", "left-[603px] top-[417px]"],
  ["16", "left-[763px] top-[417px]"], ["17", "left-[1147px] top-[401px]"], ["18", "left-[1131px] top-[457px]"],
  ["19", "left-[1131px] top-[689px]"], ["20", "left-[987px] top-[817px]"], ["21", "left-[1068px] top-[817px]"],
];
const frames = [
  "left-[36px] top-[205px] w-[111px] h-[607px] rounded-[10px]",
  "left-[142px] top-[234px] w-[57px] h-[24px] rounded-[3px]",
  "left-[1008px] top-[81px] w-[25px] h-[25px] rounded-full",
  "left-[8px] top-[931px] w-[458px] h-[26px] rounded-[4px]",
  "left-[686px] top-[250px] w-[16px] h-[26px] rounded-[50%]",
  "left-[1120px] top-[274px] w-[50px] h-[25px] rounded-[4px]",
  "left-[586px] top-[363px] w-[528px] h-[50px] rounded-[6px]",
  "left-[1120px] top-[362px] w-[26px] h-[25px] rounded-[4px]",
  "left-[1146px] top-[362px] w-[25px] h-[25px] rounded-[4px]",
  "left-[542px] top-[375px] w-[39px] h-[39px] rounded-[4px]",
  "left-[655px] top-[426px] w-[25px] h-[25px] rounded-[4px]",
  "left-[815px] top-[426px] w-[25px] h-[25px] rounded-[4px]",
  "left-[496px] top-[451px] w-[346px] h-[354px] rounded-[9px]",
  "left-[513px] top-[482px] w-[22px] h-[22px] rounded-full",
  "left-[666px] top-[609px] w-[22px] h-[22px] rounded-full",
  "left-[684px] top-[754px] w-[22px] h-[22px] rounded-full",
  "left-[841px] top-[426px] w-[344px] h-[26px] rounded-[3px]",
  "left-[843px] top-[484px] w-[335px] h-[20px] rounded-[3px]",
  "left-[843px] top-[713px] w-[335px] h-[112px] rounded-[10px]",
  "left-[492px] top-[841px] w-[534px] h-[26px] rounded-[4px]",
  "left-[1054px] top-[841px] w-[58px] h-[26px] rounded-[4px]",
];

const menu: [string, string, number][] = [
  ["F", "ile", 16], ["E", "dit", 18], ["V", "iew", 22], ["I", "nsert", 30], ["", "Format", 35], ["T", "ools", 25], ["D", "ata", 23], ["W", "indow", 37], ["H", "elp", 21],
];
const menuGap = ["ml-[8px]", "ml-[16px]", "ml-[16px]", "ml-[17px]", "ml-[15px]", "ml-[15px]", "ml-[15px]", "ml-[16px]", "ml-[15px]"];

export default function App() {
  return (
    <div className={"relative h-[1016px] w-[1202px] overflow-hidden bg-[#0040c8] text-black " + UI}>
      <div className="flex h-[1016px] flex-col rounded-t-[7px] border-x-[4px] border-b-[4px] border-[#0a45d8] border-b-[#0634b8]">
        <div className="-mx-[4px] flex h-[30px] shrink-0 items-center bg-linear-to-b from-[#1a66ee] via-[#0054e3] to-[#0463fa] pt-[2px] pr-[5px] pl-[6px]">
          <G>
            <rect x=".5" y=".5" width="15" height="15" rx="1" fill="#d8e8d0" stroke="#2c7438" strokeWidth="1.500" />
            <path d="M4 4l8 8M12 4l-8 8" stroke="#2c7c2c" strokeWidth="2.500" />
          </G>
          <T w={93} className={TITLE + " ml-[4px] text-white [text-shadow:1px_1px_0_#0a2a80]"}>Microsoft Excel</T>
          <div className="ml-auto flex gap-[3px]">
            <WinBtn kind="min" /><WinBtn kind="max" /><WinBtn kind="close" />
          </div>
        </div>
        <div className="shrink-0 bg-linear-to-r from-[#9ebef5] to-[#c4daf9] to-60% pl-[2px]">
          <div className="flex h-[25px] items-center text-[11px]">
            <Grip />
            {menu.map(([a, b, w], i) => (
              <span key={i} className={menuGap[i]}>
                {a ? (
                  <span className="flex"><span className="underline underline-offset-2">{a}</span><T w={w - 6}>{b}</T></span>
                ) : (
                  <span className="flex"><span>F</span><span className="underline underline-offset-2">o</span><T w={w - 12}>rmat</T></span>
                )}
              </span>
            ))}
            <T w={68} className="ml-[14px]">ICISworkbook</T>
            <div className="mr-[2px] ml-auto flex h-[18px] w-[149px] items-center bg-white pl-[3px] text-[#7a7a7a]">
              <T w={118}>Type a question for help</T>
              <div className="ml-auto flex h-4 w-[12px] items-center justify-center bg-[#c9dcf8]"><Caret /></div>
            </div>
          </div>
          <div className="flex h-[25px] gap-[4px]">
            <Bar className="w-[546px]" more>
              <Icons list="new open save perm mail | print preview | spell research | cut copy paste V brush | undo v redo v | globe | draw" />
              <Combo text="100%" w={28} className="ml-[2px] w-[57px]" />
            </Bar>
            <Bar className="w-[642px]">
              <Combo text="Arial" w={21} className="ml-[2px] w-[126px]" />
              <Combo text="9" w={6} className="ml-[2px] w-[38px]" />
              <Ico n="|" />
              <div className="flex font-['Liberation_Serif',serif] text-[14px] font-bold">
                <span className="w-[23px] text-center">B</span><span className="w-[23px] text-center italic">I</span><span className="w-[23px] text-center underline">U</span>
              </div>
              <div className="w-[3px]" />
              <Icons list="| al ac ar merge |" />
              <div className="flex text-[13px] text-[#222]">
                <span className="w-[23px] text-center font-['Liberation_Serif',serif] font-bold">$</span><span className="w-[23px] text-center">%</span><span className="w-[23px] text-center font-bold">,</span>
              </div>
              <Icons list="dec1 dec2 | out ind | borders V fill V fcol V" />
            </Bar>
          </div>
          <div className="flex h-[26px] gap-[3px] pt-px">
            <Bar className="w-[956px]">
              <Icons list="open2 save2 save3 xl arrowform tape bolttab | rowadd star1 star2 star3 rowdel gears | props table |" />
              <Combo text="Variate" w={35} className="w-[64px]" />
              <Icons list="vartree | boltform form | qlist stack | tools | clip doccheck glasses lock | f1 f2 f3 | barcode abc | cascade | down sigma book docx" />
            </Bar>
            <Bar className="w-[102px]" more>
              <T w={21} className="ml-[3px] text-[11px]">GMS</T>
              <div className="w-[13px] pl-[4px]"><Caret /></div>
              <svg viewBox="0 0 14 14" className="ml-[6px] h-[14px] w-[14px]"><circle cx="7" cy="7" r="6.500" fill="#2a7cd0" stroke="#185090" /><path d="M7 3v2M5.500 6.500H7.500V11M5.500 11h4" stroke="#fff" strokeWidth="1.800" fill="none" /></svg>
            </Bar>
            <Bar className="w-[63px]"><T w={28} className="ml-[3px] text-[11px]">GEMS</T><div className="pl-[4px]"><Caret /></div></Bar>
            <Bar className="w-[63px]" more><T w={27} className="ml-[3px] text-[11px]">SMTA</T><div className="pl-[4px]"><Caret /></div></Bar>
          </div>
          <div className="flex h-[17px] items-center font-['Liberation_Sans',sans-serif] text-[12px]">
            <div className="h-[16px] w-[92px] bg-white pl-[38px] leading-[16px]">B5</div>
            <div className="w-[61px] pl-[7px]"><svg viewBox="0 0 8 5" className="h-[5px] w-2"><path d="M0 0h8L4 4.500z" /></svg></div>
            <div className="w-[14px] text-[13px] font-bold italic font-['Liberation_Serif',serif]">fx</div>
            <div className="h-full grow bg-white" />
          </div>
        </div>
        <div className="relative h-[869px] shrink-0 overflow-hidden border-t border-r border-[#716f64] border-r-white bg-[#9099ae]">
          <GermplasmDialog />
          <ValidationWindow />
          <ListWindow />
        </div>
        <div className="flex grow items-center justify-end gap-px border-t border-white bg-[#ece9d8]">
          {["w-[34px]", "w-[112px]", "w-[25px]", "w-[30px]", "w-[26px]", "w-[29px]", "w-[25px]", "w-[20px]"].map((c, i) => (
            <div key={i} className={"h-[15px] border border-[#cfccbf] " + c} />
          ))}
          <svg viewBox="0 0 18 16" className="ml-px h-4 w-[18px] self-end"><path d="M14 5h2v2h-2zM10 9h2v2h-2zM14 9h2v2h-2zM6 13h2v2H6zM10 13h2v2h-2zM14 13h2v2h-2z" fill="#bbb7a2" /></svg>
        </div>
      </div>

      <div className="absolute top-[236px] left-[147px] h-[19px] w-[49px] border-[4px] border-[#00ffff] border-x-[3px]" />
      <div className="absolute top-[251px] left-[192px] h-[5px] w-[5px] border border-[#00ffff] bg-[#ff0000]" />
      <div className="absolute top-[760px] left-[845px] h-px w-[331px] bg-black" />
      {frames.map((f, i) => (
        <div key={i} className={"absolute border-2 border-black " + f} />
      ))}
      {tags.map(([n, pos]) => (
        <div key={n} className={"absolute w-[60px] text-center font-['Liberation_Sans',sans-serif] text-[27px] leading-[31px] font-bold text-[#ffff00] [font-kerning:none] [-webkit-text-stroke:4px_#000] [paint-order:stroke_fill] " + pos}>
          {n}
        </div>
      ))}
    </div>
  );
}
